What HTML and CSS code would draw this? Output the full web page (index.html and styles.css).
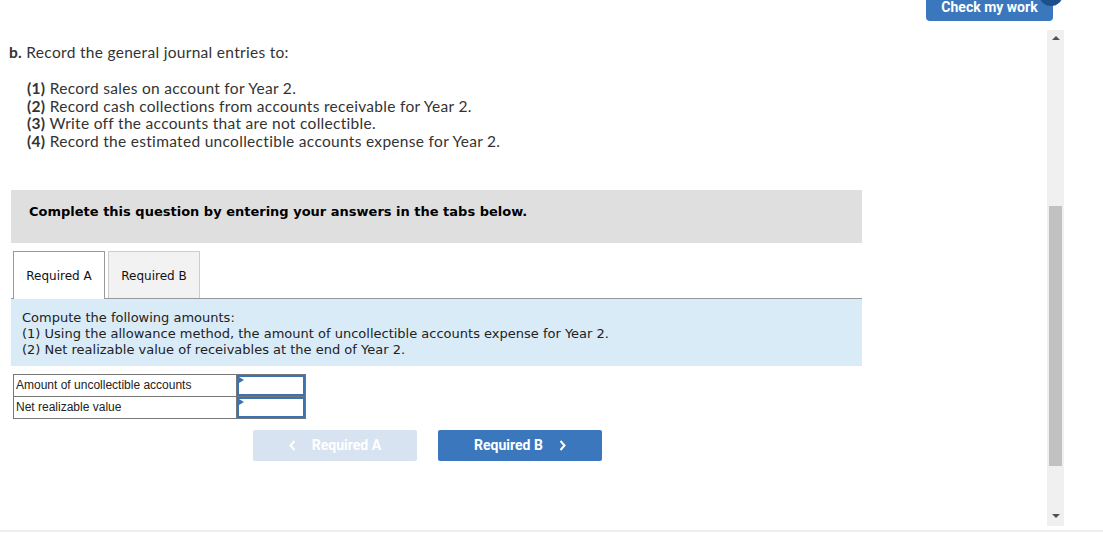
FILE: index.html
```html
<!DOCTYPE html>
<html lang="en">

<head>
    <meta charset="UTF-8">
    <meta name="viewport" content="width=device-width, initial-scale=1.0">
    <title>Question b</title>
    <link rel="stylesheet" href="styles.css">
</head>

<body>
    <div class="topbar">
        <button class="check-btn">Check my work</button>
        <span class="check-dot"></span>
    </div>

    <div class="frame">
        <div class="content">
            <p class="intro"><strong>b.</strong> Record the general journal entries to:</p>
            <ul class="steps">
                <li><strong>(1)</strong> Record sales on account for Year 2.</li>
                <li><strong>(2)</strong> Record cash collections from accounts receivable for Year 2.</li>
                <li><strong>(3)</strong> Write off the accounts that are not collectible.</li>
                <li><strong>(4)</strong> Record the estimated uncollectible accounts expense for Year 2.</li>
            </ul>

            <div class="notice">Complete this question by entering your answers in the tabs below.</div>

            <div class="tabs">
                <div class="tab active">Required A</div>
                <div class="tab">Required B</div>
            </div>

            <div class="panel">
                <p>Compute the following amounts:</p>
                <p>(1) Using the allowance method, the amount of uncollectible accounts expense for Year 2.</p>
                <p>(2) Net realizable value of receivables at the end of Year 2.</p>
            </div>

            <table class="answers">
                <tr>
                    <td class="label">Amount of uncollectible accounts</td>
                    <td class="cell"><input type="text"></td>
                </tr>
                <tr>
                    <td class="label">Net realizable value</td>
                    <td class="cell"><input type="text"></td>
                </tr>
            </table>

            <div class="nav">
                <button class="nav-btn disabled">
                    <svg class="chev left" width="7" height="11" viewBox="0 0 7 11"><path d="M5.5 1 L1.5 5.5 L5.5 10" fill="none" stroke="#fff" stroke-width="2"/></svg>
                    Required A
                </button>
                <button class="nav-btn">
                    Required B
                    <svg class="chev right" width="7" height="11" viewBox="0 0 7 11"><path d="M1.5 1 L5.5 5.5 L1.5 10" fill="none" stroke="#fff" stroke-width="2"/></svg>
                </button>
            </div>
        </div>

        <div class="scrollbar">
            <span class="arrow up"></span>
            <span class="thumb"></span>
            <span class="arrow down"></span>
        </div>
    </div>

    <div class="footer-line"></div>
</body>

</html>
```

FILE: styles.css
```css
body {
    margin: 0;
    font-family: Lato, "Open Sans", sans-serif;
    color: #333;
    background-color: #fff;
}

.topbar {
    position: relative;
    height: 30px;
    display: flex;
    justify-content: flex-end;
    align-items: flex-start;
    padding-right: 50px;
}

.check-btn {
    width: 127px;
    height: 21px;
    border: none;
    border-radius: 0 0 4px 4px;
    background-color: #3a77bd;
    color: #fff;
    font-family: Roboto, sans-serif;
    font-weight: bold;
    font-size: 14px;
    padding: 0 0 8px;
    line-height: 14px;
}

.check-dot {
    position: absolute;
    right: 40px;
    top: -18px;
    width: 24px;
    height: 24px;
    border-radius: 50%;
    background-color: #1e4f8c;
}

.frame {
    display: flex;
    align-items: flex-start;
    padding-right: 39px;
}

.content {
    flex: 1;
    padding: 13px 0 0 9px;
}

.intro {
    margin: 0;
    font-size: 15.5px;
    letter-spacing: 0.3px;
    line-height: 18px;
}

.steps {
    list-style: none;
    margin: 19px 0 0;
    padding-left: 18px;
    font-size: 15.5px;
    letter-spacing: 0.3px;
    line-height: 17.67px;
}

.notice {
    width: 851px;
    height: 53px;
    margin: 39px 0 0 2px;
    padding: 14px 0 0 18px;
    box-sizing: border-box;
    background-color: #dfdfdf;
    color: #000;
    font-family: "DejaVu Sans", Verdana, sans-serif;
    font-weight: bold;
    font-size: 13px;
    line-height: 16px;
}

.tabs {
    display: flex;
    gap: 3px;
    width: 851px;
    margin: 8px 0 0 2px;
    border-bottom: 1px solid #999;
}

.tab {
    width: 92px;
    height: 47px;
    box-sizing: border-box;
    display: flex;
    align-items: center;
    justify-content: center;
    padding-top: 2px;
    border: 1px solid #ccc;
    border-bottom: none;
    background-color: #f2f2f2;
    font-family: "DejaVu Sans", Verdana, sans-serif;
    font-size: 12px;
    color: #111;
}

.tab.active {
    height: 48px;
    margin-bottom: -1px;
    margin-left: 2px;
    border-color: #999;
    background-color: #fff;
}

.panel {
    width: 851px;
    margin-left: 2px;
    padding: 11px 11px 8px;
    box-sizing: border-box;
    background-color: #daebf8;
    font-family: "DejaVu Sans", Verdana, sans-serif;
    font-size: 13px;
    line-height: 16px;
    color: #222;
}

.panel p {
    margin: 0;
}

.answers {
    margin: 8px 0 0 4px;
    border-collapse: collapse;
    font-family: "Liberation Sans", Arial, sans-serif;
    font-size: 12px;
    color: #222;
}

.answers td {
    border: 1px solid #777;
    height: 21px;
    padding: 0;
}

.answers .label {
    width: 220px;
    padding-left: 2px;
}

.answers .cell {
    width: 68px;
    position: relative;
}

.answers input {
    display: block;
    width: 68px;
    height: 21px;
    margin: 0;
    box-sizing: border-box;
    border: 2px solid #3b72b4;
    padding: 0 4px;
}

.answers .cell::before {
    content: "";
    position: absolute;
    left: 2px;
    top: 2px;
    border-top: 3px solid transparent;
    border-bottom: 3px solid transparent;
    border-left: 5px solid #3b72b4;
}

.nav {
    display: flex;
    gap: 21px;
    margin: 11px 0 0 244px;
}

.nav-btn {
    width: 164px;
    height: 31px;
    border: none;
    border-radius: 2px;
    background-color: #3a77bd;
    color: #fff;
    font-family: Roboto, sans-serif;
    font-weight: bold;
    font-size: 14px;
    display: flex;
    align-items: center;
    justify-content: center;
}

.nav-btn.disabled {
    background-color: #d7e3f1;
}

.chev.left {
    margin-right: 16px;
}

.chev.right {
    margin-left: 16px;
}

.scrollbar {
    width: 17px;
    height: 496px;
    position: relative;
    background-color: #f0f0f0;
}

.thumb {
    position: absolute;
    left: 2px;
    top: 176px;
    width: 13px;
    height: 260px;
    background-color: #c1c1c1;
}

.arrow {
    position: absolute;
    left: 5px;
    border-left: 4px solid transparent;
    border-right: 4px solid transparent;
}

.arrow.up {
    top: 6px;
    border-bottom: 4px solid #505050;
}

.arrow.down {
    bottom: 8px;
    border-top: 4px solid #505050;
}

.footer-line {
    height: 2px;
    margin-top: 4px;
    background-color: #eee;
}
```
